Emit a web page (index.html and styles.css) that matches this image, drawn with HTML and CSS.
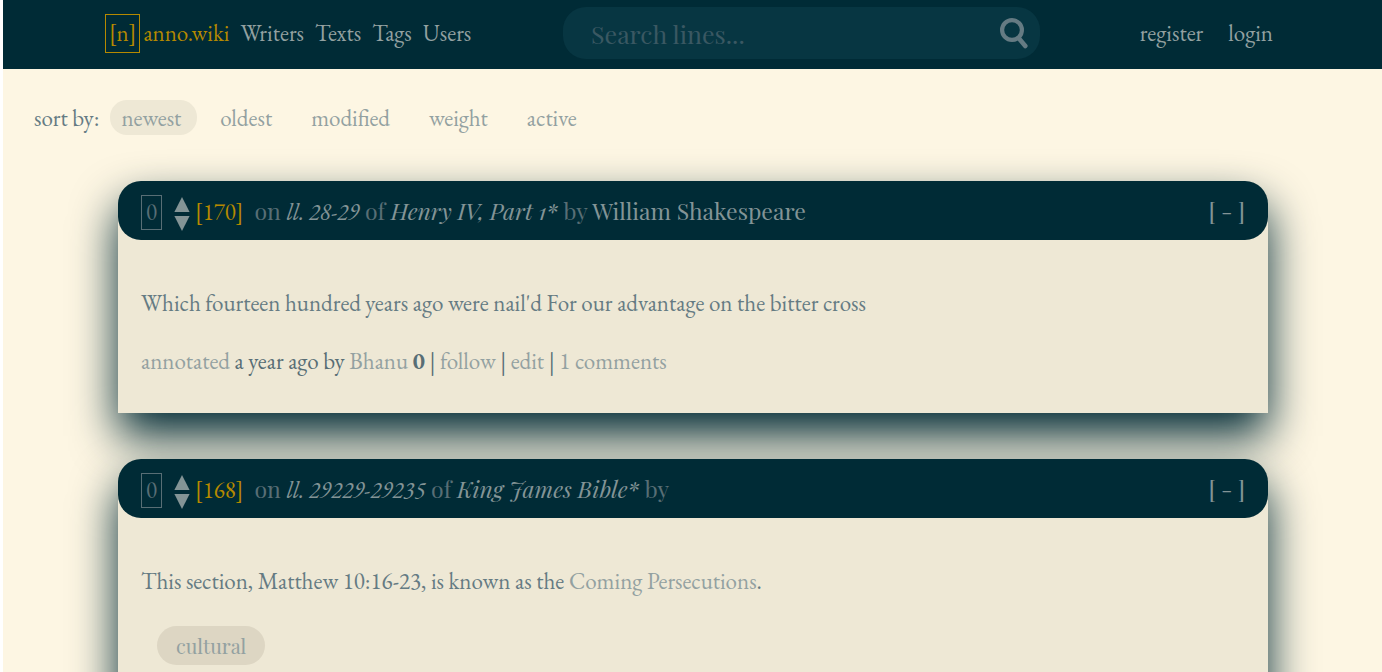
FILE: index.html
```
<!DOCTYPE html>
<html lang="en">
<head>
<meta charset="utf-8">
<title>anno.wiki</title>
<link rel="stylesheet" href="styles.css">
</head>
<body>
<header class="topbar">
  <nav class="nav">
    <a class="brand" href="#"><span class="brand-mark">[n]</span><span>anno.wiki</span></a>
    <a href="#">Writers</a>
    <a href="#">Texts</a>
    <a href="#">Tags</a>
    <a href="#">Users</a>
  </nav>
  <form class="search">
    <input class="search-input" type="text" placeholder="Search lines..." aria-label="Search lines">
    <button class="search-button" type="submit" aria-label="Search">
      <svg width="28" height="32" viewBox="0 0 28 32" fill="none" stroke="currentColor" stroke-linecap="round"><circle cx="12" cy="13" r="9.900" stroke-width="4.200"/><path d="M19 21.500l6.300 7.500" stroke-width="4.600"/></svg>
    </button>
  </form>
  <nav class="account">
    <a href="#">register</a>
    <a href="#">login</a>
  </nav>
</header>
<main>
  <nav class="sort">
    <span class="sort-label">sort by:</span>
    <a class="sort-link sort-active" href="#">newest</a>
    <a class="sort-link" href="#">oldest</a>
    <a class="sort-link" href="#">modified</a>
    <a class="sort-link" href="#">weight</a>
    <a class="sort-link" href="#">active</a>
  </nav>
  <section class="cards">
    <article class="card">
      <header class="card-head">
        <span class="score">0</span>
        <div class="votes">
          <button class="vote" type="button" aria-label="Upvote"><svg width="16" height="15" viewBox="0 0 16 15"><path d="M8 0l7.600 15H.4z"/></svg></button>
          <button class="vote" type="button" aria-label="Downvote"><svg width="16" height="15" viewBox="0 0 16 15"><path d="M.4 0h15.200L8 15z"/></svg></button>
        </div>
        <a class="number" href="#">[170]</a>
        <h2 class="source">on <a class="lines" href="#">ll. 28-29</a> of <a class="title" href="#">Henry IV, Part 1*</a> by <a href="#">William Shakespeare</a></h2>
        <button class="fold" type="button" aria-label="Collapse">[ - ]</button>
      </header>
      <div class="card-body">
        <p>Which fourteen hundred years ago were nail'd For our advantage on the bitter cross</p>
        <p class="meta"><a href="#">annotated</a> a year ago by <a href="#">Bhanu</a> <b>0</b> | <a href="#">follow</a> | <a href="#">edit</a> | <a href="#">1 comments</a></p>
      </div>
    </article>
    <article class="card">
      <header class="card-head">
        <span class="score">0</span>
        <div class="votes">
          <button class="vote" type="button" aria-label="Upvote"><svg width="16" height="15" viewBox="0 0 16 15"><path d="M8 0l7.600 15H.4z"/></svg></button>
          <button class="vote" type="button" aria-label="Downvote"><svg width="16" height="15" viewBox="0 0 16 15"><path d="M.4 0h15.200L8 15z"/></svg></button>
        </div>
        <a class="number" href="#">[168]</a>
        <h2 class="source">on <a class="lines" href="#">ll. 29229-29235</a> of <a class="title" href="#">King James Bible*</a> by</h2>
        <button class="fold" type="button" aria-label="Collapse">[ - ]</button>
      </header>
      <div class="card-body">
        <p>This section, Matthew 10:16-23, is known as the <a href="#">Coming Persecutions</a>.</p>
        <div class="tags"><a class="tag" href="#">cultural</a></div>
      </div>
    </article>
  </section>
</main>
</body>
</html>
```

FILE: styles.css
```
* { box-sizing: border-box; }
html { background: #fff; }
body {
  margin: 0 0 0 3px;
  background: #fdf6e3;
  color: #657b83;
  font: 23px/29px "EB Garamond", "Liberation Serif", serif;
}
a { color: #93a1a1; text-decoration: none; }
button { border: 0; padding: 0; background: none; font: inherit; cursor: pointer; }
p { margin: 0; }

.topbar {
  display: grid;
  grid-template-columns: 458fr 477fr 233fr;
  align-items: center;
  padding: 7px 109px 10px 102px;
  background: #002b36;
}
.nav, .account { display: flex; align-items: center; }
.nav { gap: 11px; }
.brand { display: flex; align-items: center; gap: 3px; color: #b58900; }
.brand-mark { border: 1px solid #b58900; padding: 4px 3px; }
.account { justify-content: flex-end; gap: 25px; }

.search {
  display: flex;
  align-items: center;
  height: 52px;
  padding: 0 12px 0 28px;
  border-radius: 23px;
  background: #073642;
}
.search-input {
  flex: 1;
  min-width: 0;
  border: 0;
  padding: 2px 0 0;
  background: none;
  color: #93a1a1;
  font: 25px/34px "Playfair Display", "Liberation Serif", serif;
  outline: 0;
}
.search-input::placeholder { color: #3a5862; opacity: 1; }
.search-button { display: flex; color: #657b83; }

.sort { display: flex; align-items: center; gap: 12px; padding: 31px; }
.sort-label { margin-right: -1px; padding-top: 2px; }
.sort-link { padding: 4px 16px 2px 11px; border-radius: 17px; }
.sort-active { background: #eee8d5; }

.cards { display: grid; gap: 46px; padding: 15px 114px 46px 115px; }
.card {
  border-radius: 23px 23px 0 0;
  background: #eee8d5;
  box-shadow: 0 23px 46px #002b36;
}
.card-head {
  display: flex;
  align-items: center;
  padding: 13px 23px 9px;
  border-radius: 23px;
  background: #002b36;
  color: #586e75;
}
.score { border: 1px solid #586e75; padding: 2px 4px; }
.votes { display: grid; gap: 4px; margin: 3px 5px 0 12px; }
.vote { display: flex; color: #839496; }
.vote svg { fill: currentColor; }
.number { color: #b58900; }
.source {
  flex: 1;
  margin: 0 0 3px 11px;
  font: 23px/30px "Playfair Display", "Liberation Serif", serif;
}
.source a { color: #839496; }
.source .lines { font-family: "EB Garamond", "Liberation Serif", serif; font-style: italic; }
.source .title { font-style: oblique 14deg; }
.fold {
  margin-bottom: 4px;
  color: #839496;
  font-family: "Playfair Display", "Liberation Serif", serif;
}

.card-body { padding: 49px 23px 37px; }
.meta { margin-top: 29px; color: #586e75; }
.tags { display: flex; margin: 30px 0 92px 16px; }
.tag {
  padding: 5px 19px;
  border-radius: 20px;
  background: #ddd6c3;
  font: 20px/29px "Playfair Display", "Liberation Serif", serif;
}
```
